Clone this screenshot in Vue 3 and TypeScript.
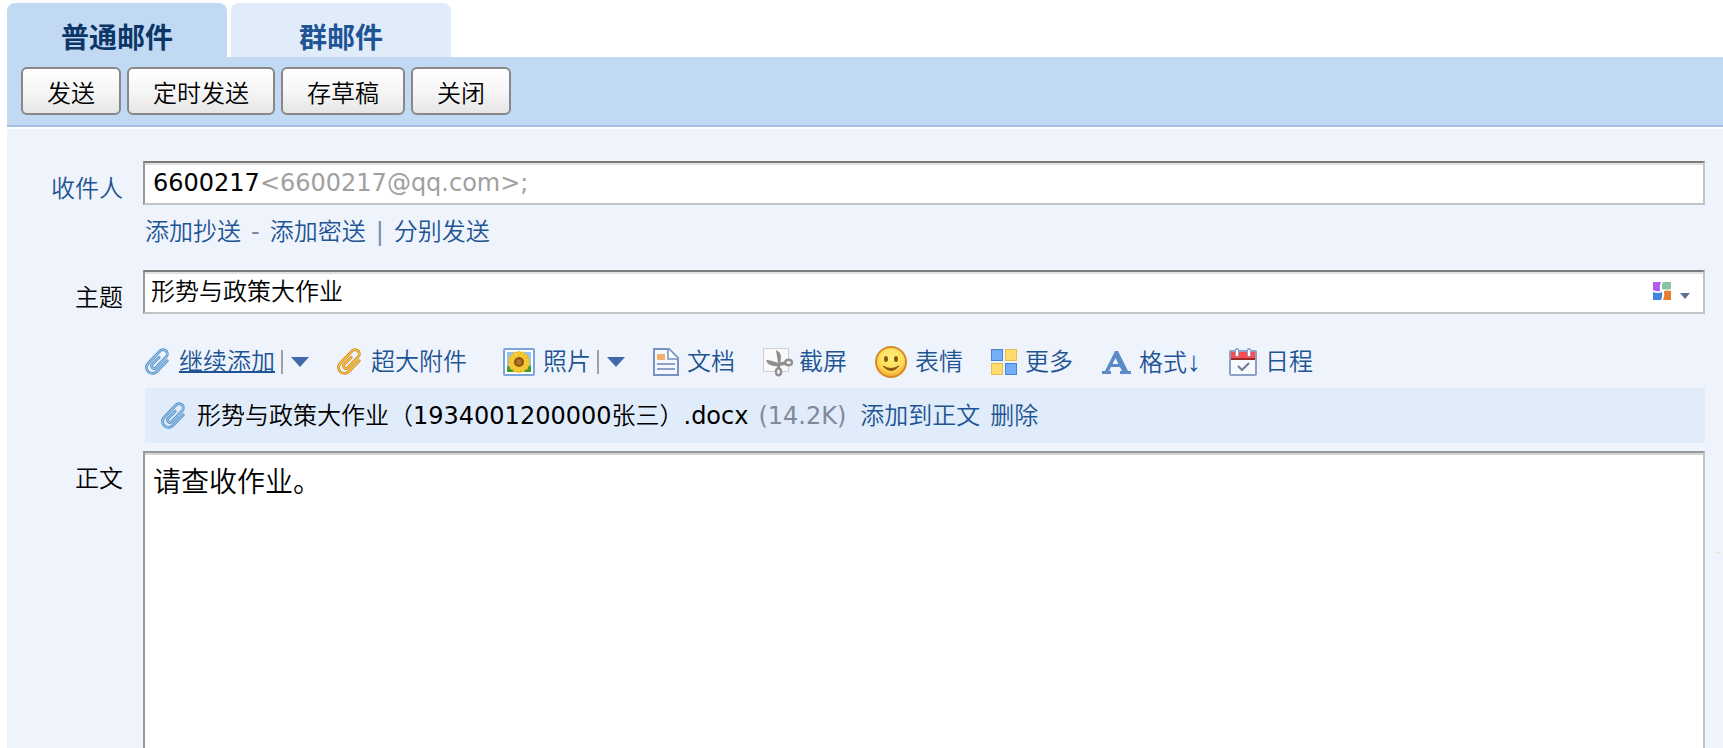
<script setup lang="ts">
import { ref } from 'vue'

interface Mode { id: string; label: string }

const modes: Mode[] = [
  { id: 'normal', label: '普通邮件' },
  { id: 'group', label: '群邮件' },
]
const activeMode = ref('normal')
const actions: string[] = ['发送', '定时发送', '存草稿', '关闭']
const recipientInput = ref('')
const subject = ref('形势与政策大作业')
const body = ref('请查收作业。')
const petals: number[] = Array.from({ length: 14 }, (_, i) => (i * 360) / 14)
const clip = 'M6.5 -8V7A6 6 0 0 1 -5.5 7V-10A4.25 4.25 0 0 1 3 -10V5A2.4 2.4 0 0 1 -1.8 5V-5'
</script>

<template>
  <main class="compose">
    <nav class="tabs">
      <button
        v-for="mode in modes"
        :key="mode.id"
        type="button"
        class="tab"
        :class="{ active: mode.id === activeMode }"
        @click="activeMode = mode.id"
      >{{ mode.label }}</button>
    </nav>

    <div class="actions">
      <button v-for="action in actions" :key="action" type="button" class="action">{{ action }}</button>
    </div>

    <form class="form" @submit.prevent>
      <label class="label link-label" for="to">收件人</label>
      <div class="cell">
        <div class="field recipients">
          <span class="name">6600217</span><span class="address">&lt;6600217@qq.com&gt;;</span>
          <input id="to" v-model="recipientInput" class="plain" type="text" autocomplete="off" />
        </div>
        <div class="extras">
          <a href="#">添加抄送</a><span>-</span><a href="#">添加密送</a><span>|</span><a href="#">分别发送</a>
        </div>
      </div>

      <label class="label" for="subject">主题</label>
      <div class="cell">
        <div class="field subject">
          <input id="subject" v-model="subject" class="plain" type="text" autocomplete="off" />
          <button type="button" class="palette" aria-label="主题颜色">
            <svg width="18" height="18" viewBox="0 0 18 18">
              <path d="M0 0H8Q6 4 7 9Q4 10 0 8Z" fill="#b05df0" />
              <path d="M10 0H18V7Q13 8 9 7Q8 3 10 0Z" fill="#87c3a5" />
              <path d="M0 10Q5 12 9 10Q10 14 8 18H0Z" fill="#4286dc" />
              <path d="M11 9Q14 8 18 9V18H10Q12 14 11 9Z" fill="#e97e2e" />
            </svg>
            <svg class="caret" width="10" height="6" viewBox="0 0 10 6"><path d="M0 0H10L5 6Z" fill="#587195" /></svg>
          </button>
        </div>

        <div class="tools">
          <div class="tool">
            <a href="#" class="current">
              <svg width="26" height="28" viewBox="-12 -14 26 28" fill="none" stroke-linecap="round">
                <g transform="rotate(44)">
                  <path :d="clip" stroke="#4f86ba" stroke-width="2.8" />
                  <path :d="clip" stroke="#8fc3ee" stroke-width="1.4" />
                </g>
              </svg><span>继续添加</span>
            </a>
            <button type="button" class="more" aria-label="添加附件选项"><svg width="18" height="10" viewBox="0 0 18 10"><path d="M0 0H18L9 10Z" fill="#4169a9" /></svg></button>
          </div>
          <div class="tool wide">
            <a href="#">
              <svg width="26" height="28" viewBox="-12 -14 26 28" fill="none" stroke-linecap="round">
                <g transform="rotate(44)">
                  <path :d="clip" stroke="#c4841e" stroke-width="2.8" />
                  <path :d="clip" stroke="#ffc040" stroke-width="1.4" />
                </g>
              </svg><span>超大附件</span>
            </a>
          </div>
          <div class="tool">
            <a href="#">
              <svg width="32" height="28" viewBox="0 0 32 28">
                <rect x="1" y="1" width="30" height="26" rx="1" fill="#fff" stroke="#7fa5d8" stroke-width="2" />
                <rect x="4" y="4" width="24" height="20" fill="#8fc4f4" />
                <path d="M4 18L9 20L16 22L23 20L28 17V24H4Z" fill="#3f9a35" />
                <g fill="#f9cd35" stroke="#e3a824" stroke-width=".5">
                  <ellipse v-for="angle in petals" :key="angle" cx="16" cy="7" rx="2.4" ry="4" :transform="`rotate(${angle} 16 14)`" />
                </g>
                <circle cx="16" cy="14" r="5" fill="#8d5a18" />
                <circle cx="16" cy="14" r="2.6" fill="#b07a2a" />
              </svg><span>照片</span>
            </a>
            <button type="button" class="more" aria-label="照片选项"><svg width="18" height="10" viewBox="0 0 18 10"><path d="M0 0H18L9 10Z" fill="#4169a9" /></svg></button>
          </div>
          <div class="tool">
            <a href="#">
              <svg width="26" height="28" viewBox="0 0 26 28">
                <path d="M1 1H16L25 10V27H1Z" fill="#f4f8fd" stroke="#7794c1" stroke-width="2" />
                <path d="M15 1V11H25" fill="#fff" stroke="#7794c1" stroke-width="1.6" />
                <rect x="4" y="6" width="8" height="6" fill="#f2b168" />
                <path d="M4 16H22M4 21H22" stroke="#8aa2ca" stroke-width="2" />
              </svg><span>文档</span>
            </a>
          </div>
          <div class="tool snip">
            <a href="#">
              <svg width="30" height="30" viewBox="0 0 30 30">
                <rect x=".5" y="1.5" width="25" height="23" fill="#fafafa" stroke="#cfcfcf" />
                <path d="M13 3Q18 5 18 10L17 21H14L15 16ZM3 13Q8 13 15 16L23 14V18L15 19Q5 20 3 13Z" fill="#8e8e8e" />
                <ellipse cx="25.600" cy="15.500" rx="3.400" ry="2.800" fill="#f4f6f9" stroke="#8e8e8e" stroke-width="2.4" />
                <ellipse cx="15.500" cy="24.800" rx="2.600" ry="3.600" fill="#f4f6f9" stroke="#8e8e8e" stroke-width="2.4" />
              </svg><span>截屏</span>
            </a>
          </div>
          <div class="tool">
            <a href="#">
              <svg width="32" height="32" viewBox="0 0 32 32">
                <defs>
                  <radialGradient id="face" cx=".5" cy=".35" r=".65"><stop offset="0" stop-color="#fff07a" /><stop offset=".65" stop-color="#ffdb58" /><stop offset="1" stop-color="#f3a52f" /></radialGradient>
                </defs>
                <circle cx="16" cy="16" r="15" fill="url(#face)" stroke="#d98a25" stroke-width="2" />
                <ellipse cx="11" cy="13" rx="2" ry="3" fill="#8b5510" /><ellipse cx="21" cy="13" rx="2" ry="3" fill="#8b5510" />
                <path d="M8 20Q16 29 24 20Q16 25 8 20Z" fill="#8b5510" stroke="#8b5510" />
              </svg><span>表情</span>
            </a>
          </div>
          <div class="tool">
            <a href="#">
              <svg width="26" height="26" viewBox="0 0 26 26">
                <g fill="#74aef8" stroke="#4583d6"><rect x=".5" y=".5" width="11" height="11" /><rect x="14.500" y="14.500" width="11" height="11" /></g>
                <g fill="#ffdc6c" stroke="#e9bd4c"><rect x="14.500" y=".5" width="11" height="11" /><rect x=".5" y="14.500" width="11" height="11" /></g>
              </svg><span>更多</span>
            </a>
          </div>
          <div class="tool">
            <a href="#">
              <svg width="30" height="24" viewBox="-1 -1 30 24">
                <path d="M13 0H16L26 20H29V23H18V20H20L18 16H9L7 20H9V23H0V20H3ZM10.500 13H16.500L13.500 7Z" fill="#5b8ac6" fill-rule="evenodd" />
              </svg><span>格式<span class="down">↓</span></span>
            </a>
          </div>
          <div class="tool">
            <a href="#">
              <svg width="28" height="28" viewBox="0 0 28 28">
                <rect x="1" y="3" width="26" height="24" rx="1" fill="#f8fbfd" stroke="#8da1c8" stroke-width="2" />
                <path d="M2 4H26V10H2Z" fill="#ff4c4c" /><path d="M2 10H26V12H2Z" fill="#9c2828" />
                <path d="M8 2V7M20 2V7" stroke="#8da1c8" stroke-width="4" stroke-linecap="round" /><path d="M8 2V8M20 2V8" stroke="#fff" stroke-width="2" />
                <path d="M9 18L13 22L20 15" fill="none" stroke="#6e7d94" stroke-width="2" />
              </svg><span>日程</span>
            </a>
          </div>
        </div>

        <div class="attachment">
          <svg width="26" height="28" viewBox="-12 -14 26 28" fill="none" stroke-linecap="round">
            <g transform="rotate(44)">
              <path :d="clip" stroke="#4f86ba" stroke-width="2.8" />
              <path :d="clip" stroke="#8fc3ee" stroke-width="1.4" />
            </g>
          </svg>
          <span class="file">形势与政策大作业（1934001200000张三）.docx</span>
          <span class="size">(14.2K)</span>
          <a href="#">添加到正文</a>
          <a href="#">删除</a>
        </div>
      </div>

      <label class="label" for="body">正文</label>
      <textarea id="body" v-model="body" class="body" spellcheck="false"></textarea>
    </form>
    <span class="marker"></span>
  </main>
</template>

<style>
body {
  background: #fff;
}
</style>

<style scoped>
.compose {
  position: relative;
  box-sizing: border-box;
  display: flex;
  flex-direction: column;
  min-height: 100vh;
  padding: 3px 0 0 7px;
  font-family: "DejaVu Sans", "Noto Sans CJK SC DemiLight", "Noto Sans CJK SC", sans-serif;
  font-size: 24px;
  line-height: 32px;
  color: #000;
}
button, input, textarea {
  box-sizing: border-box;
  margin: 0;
  font: inherit;
  color: inherit;
}
button {
  cursor: pointer;
}
a {
  color: #1e5494;
  text-decoration: none;
}
svg {
  display: block;
  flex: none;
}
.tabs {
  display: flex;
  gap: 4px;
}
.tab {
  width: 220px;
  height: 54px;
  padding: 12px 0 0;
  border: 0;
  border-radius: 8px 8px 0 0;
  background: #e0ecf9;
  color: #1e5494;
  font-family: "Noto Sans CJK SC", sans-serif;
  font-size: 28px;
  font-weight: 700;
  line-height: 40px;
}
.tab.active {
  background: #c1d9f3;
  color: #0b3667;
}
.actions {
  display: flex;
  gap: 6px;
  padding: 10px 14px;
  border-bottom: 2px solid #a3bfe1;
  background: #c1d9f3;
}
.action {
  height: 48px;
  padding: 2px 24px 0;
  border: 2px solid #888;
  border-radius: 6px;
  background: linear-gradient(#fff, #f6f6f6 50%, #e6e6e6);
  font-family: "Noto Sans CJK SC", sans-serif;
  font-weight: 350;
}
.form {
  flex: 1;
  display: grid;
  grid-template-columns: 136px minmax(0, 1fr);
  grid-template-rows: auto auto 1fr;
  margin-top: 2px;
  padding: 32px 18px 0 0;
  background: #eff4fc;
}
.label {
  padding: 12px 20px 0 0;
  text-align: right;
}
.link-label {
  color: #1e5494;
}
.field {
  box-sizing: border-box;
  display: flex;
  align-items: center;
  height: 44px;
  border: 2px solid;
  border-color: #7c7c7c #c3c3c3 #c3c3c3 #999;
  background: #fff;
  box-shadow: inset 0 2px #e1e1e1;
}
.recipients {
  padding: 0 8px;
}
.subject {
  padding: 0 13px 0 6px;
}
.address {
  color: #a0a0a0;
}
.plain {
  flex: 1;
  min-width: 0;
  padding: 0;
  border: 0;
  outline: 0;
  background: transparent;
}
.palette {
  display: flex;
  align-items: center;
  gap: 9px;
  padding: 0 0 2px;
  border: 0;
  background: none;
}
.caret {
  margin-top: 10px;
}
.extras {
  display: flex;
  gap: 10px;
  padding: 11px 2px 22px;
  color: #7b8ba5;
}
.tools {
  display: flex;
  gap: 28px;
  align-items: center;
  height: 52px;
  margin: 22px 0 0 2px;
  white-space: nowrap;
}
.tool, .tool a {
  display: flex;
  align-items: center;
}
.tool a {
  gap: 8px;
}
.wide {
  margin-right: 8px;
}
.snip a {
  gap: 6px;
}
.current span {
  text-decoration: underline;
  text-decoration-thickness: 2px;
}
.more {
  height: 24px;
  margin-left: 6px;
  padding: 0 0 0 8px;
  border: 0;
  border-left: 2px solid #a0a0a0;
  background: none;
}
.down {
  font-family: "Liberation Sans", sans-serif;
  font-size: 28px;
}
.attachment {
  display: flex;
  align-items: center;
  gap: 10px;
  height: 55px;
  margin: 0 0 8px 2px;
  padding-left: 16px;
  background: #e0ecf9;
  white-space: nowrap;
}
.size {
  margin-right: 4px;
  color: #7f899c;
}
.body {
  width: 100%;
  height: 100%;
  min-height: 240px;
  padding: 10px 8px;
  border: 2px solid;
  border-color: #999 #c3c3c3 #c3c3c3 #999;
  border-bottom: 0;
  outline: 0;
  resize: none;
  background: #fff;
  box-shadow: inset 0 2px #d5d5d5;
  font-size: 28px;
  line-height: 40px;
}
.marker {
  position: absolute;
  top: 552px;
  right: 2px;
  width: 4px;
  height: 1px;
  background: #ffdcb8;
}
</style>
